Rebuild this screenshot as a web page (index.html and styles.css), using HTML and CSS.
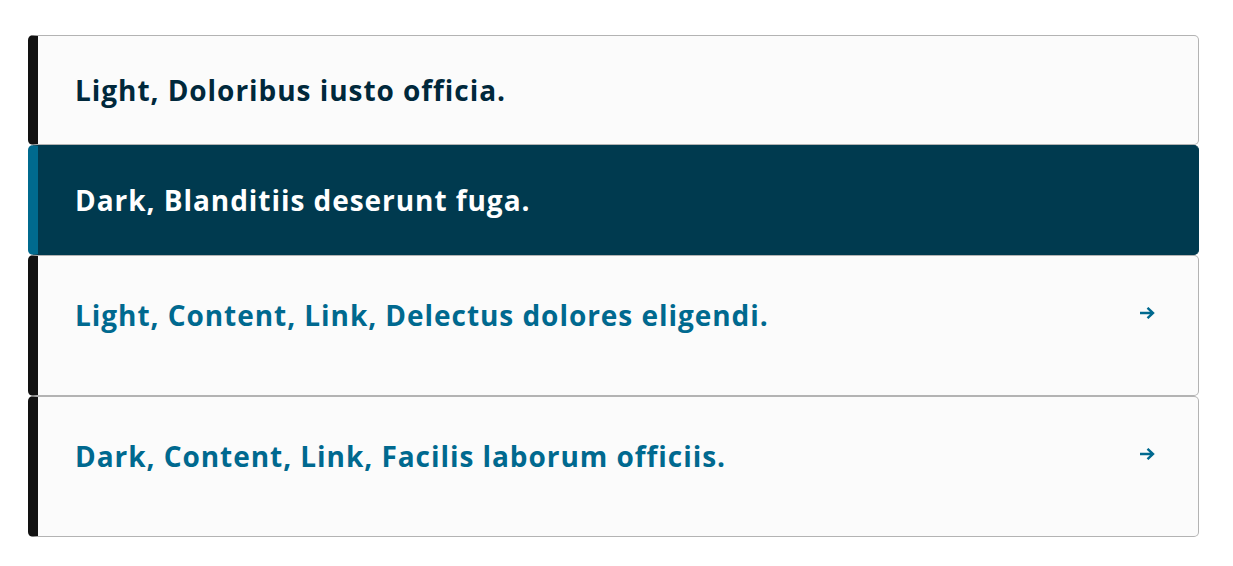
FILE: index.html
```html
<!DOCTYPE html>
<html>
<head>
<meta charset="utf-8">
<link rel="stylesheet" href="styles.css">
</head>
<body>
<div class="list">
  <div class="card card-light">
    <p class="title">Light, Doloribus iusto officia.</p>
  </div>
  <div class="card card-dark">
    <p class="title">Dark, Blanditiis deserunt fuga.</p>
  </div>
  <a class="card card-link" href="#">
    <p class="title">Light, Content, Link, Delectus dolores eligendi.</p>
    <svg class="arrow" width="16" height="12" viewBox="0 0 16 12"><path d="M1 6H14M8.5 0.8L14 6L8.5 11.2" fill="none" stroke="currentColor" stroke-width="2.4"/></svg>
  </a>
  <a class="card card-link" href="#">
    <p class="title">Dark, Content, Link, Facilis laborum officiis.</p>
    <svg class="arrow" width="16" height="12" viewBox="0 0 16 12"><path d="M1 6H14M8.5 0.8L14 6L8.5 11.2" fill="none" stroke="currentColor" stroke-width="2.4"/></svg>
  </a>
</div>
</body>
</html>
```
FILE: styles.css
```css
* { box-sizing: border-box; }
body {
  margin: 0;
  background: #ffffff;
  font-family: "Open Sans", "Noto Sans", sans-serif;
}
.list {
  display: flex;
  flex-direction: column;
  margin: 35px 34px 0 28px;
}
.card {
  display: flex;
  align-items: flex-start;
  justify-content: space-between;
  background: #fbfbfb;
  border: 1px solid #b3b3b3;
  border-left: 10px solid #121212;
  border-radius: 5px;
  padding: 33px 43px 32px 37px;
  min-height: 110px;
  text-decoration: none;
}
.title {
  margin: 0;
  font-size: 28px;
  font-weight: 700;
  letter-spacing: 0.95px;
  line-height: 42px;
  color: #00283b;
  font-variant-ligatures: none;
}
.card-dark {
  background: #003a4f;
  border-color: #003a4f;
  border-left-color: #006a8e;
}
.card-dark .title { color: #ffffff; }
.card-link {
  min-height: 141px;
  padding-top: 38px;
}
.card-link .title { color: #00698f; }
.arrow {
  color: #00698f;
  margin-top: 13px;
  flex: none;
}
```
